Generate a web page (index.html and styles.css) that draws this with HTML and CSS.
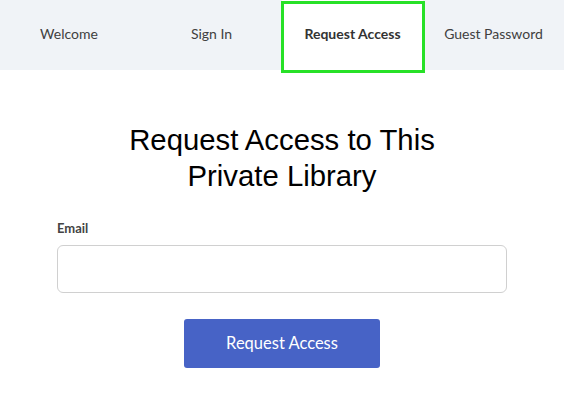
FILE: index.html
```html
<!DOCTYPE html>
<html>
<head>
<meta charset="utf-8">
<link rel="stylesheet" href="styles.css">
</head>
<body>
<nav class="tabs">
  <div class="tab">Welcome</div>
  <div class="tab">Sign In</div>
  <div class="tab active">Request Access</div>
  <div class="tab">Guest Password</div>
  <div class="highlight"></div>
</nav>
<main class="content">
  <h1 class="title">Request Access to This<br>Private Library</h1>
  <label class="label" for="email">Email</label>
  <input class="input" id="email" type="email">
  <div class="actions">
    <button class="btn">Request Access</button>
  </div>
</main>
</body>
</html>
```
FILE: styles.css
```css
* { box-sizing: border-box; }
html, body { margin: 0; padding: 0; background: #fff; }
body { font-family: Lato, "Open Sans", sans-serif; color: #333; width: 564px; height: 400px; overflow: hidden; }
.tabs {
  position: relative;
  display: grid;
  grid-template-columns: repeat(4, 141px);
  height: 70px;
  background: #f0f3f7;
}
.tab {
  display: flex;
  align-items: center;
  justify-content: center;
  padding-bottom: 3px;
  font-size: 14px;
  color: #404040;
}
.tab:first-child { padding-right: 3px; }
.tab.active { background: #fff; font-weight: 700; color: #333; }
.highlight {
  position: absolute;
  left: 281px;
  top: 1px;
  width: 144px;
  height: 72px;
  border: 3px solid #27e127;
}
.content { padding: 52px 57px 0 57px; }
.title {
  margin: 0;
  font-family: "Liberation Sans", Arial, sans-serif;
  font-weight: 400;
  font-size: 29.3px;
  line-height: 36px;
  text-align: center;
  color: #000;
}
.label {
  display: block;
  margin-top: 26px;
  font-size: 13px;
  font-weight: 700;
  color: #444;
}
.input {
  display: block;
  margin-top: 9px;
  width: 450px;
  height: 48px;
  border: 1px solid #d0d0d0;
  border-radius: 6px;
  background: #fff;
}
.actions { display: flex; justify-content: center; margin-top: 26px; }
.btn {
  width: 196px;
  height: 49px;
  border: none;
  border-radius: 3px;
  background: #4763c6;
  color: #fff;
  font-family: Lato, "Open Sans", sans-serif;
  font-size: 16.5px;
  padding: 0 0 2px 0;
}
```
